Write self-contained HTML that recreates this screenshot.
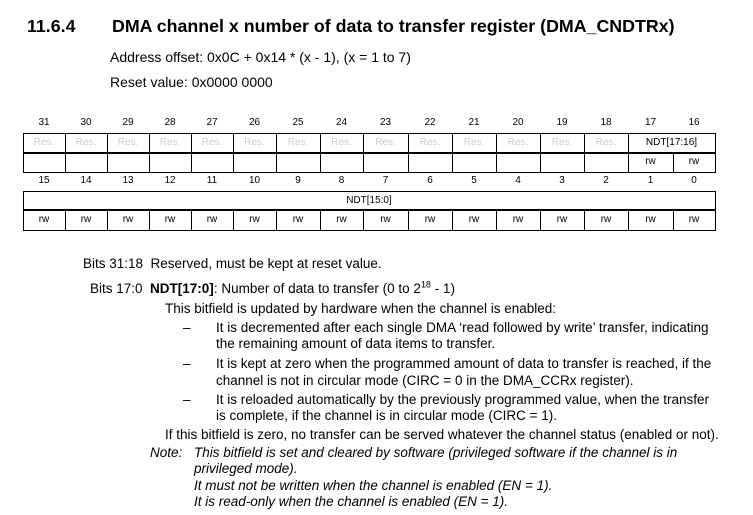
<!DOCTYPE html>
<html><head><meta charset="utf-8"><style>
body{margin:0;width:753px;height:515px;background:#fff;position:relative;font-family:"Liberation Sans",Arial,sans-serif;color:#000;overflow:hidden}
.a{position:absolute;white-space:nowrap;font-size:13.5px;line-height:15px}
.t{position:absolute;font-weight:bold;font-size:17.8px;top:16px}
.c{position:absolute;font-size:10px;text-align:center;line-height:10px}
.box{position:absolute;border:1px solid #000;box-sizing:border-box}
.g{color:#ccc}
i{font-style:italic}
</style></head><body>
<div class="t" style="left:27px">11.6.4</div>
<div class="t" style="left:112px">DMA channel x number of data to transfer register (DMA_CNDTRx)</div>
<div class="a" style="left:110px;top:50px;font-size:14px">Address offset: 0x0C + 0x14 * (x - 1), (x = 1 to 7)</div>
<div class="a" style="left:110px;top:75px;font-size:14px">Reset value: 0x0000 0000</div>
<div id="reg"></div>
<div class="a" style="left:83px;top:256px">Bits 31:18&nbsp; Reserved, must be kept at reset value.</div>
<div class="a" style="left:90px;top:281px">Bits 17:0&nbsp; <b>NDT[17:0]</b>: Number of data to transfer (0 to 2<sup style="font-size:9px;line-height:0">18</sup> - 1)</div>
<div class="a" style="left:165px;top:301px">This bitfield is updated by hardware when the channel is enabled:</div>
<div class="a" style="left:183px;top:320px">–</div>
<div class="a" style="left:216px;top:320px">It is decremented after each single DMA ‘read followed by write’ transfer, indicating</div>
<div class="a" style="left:216px;top:336px">the remaining amount of data items to transfer.</div>
<div class="a" style="left:183px;top:356px">–</div>
<div class="a" style="left:216px;top:356px">It is kept at zero when the programmed amount of data to transfer is reached, if the</div>
<div class="a" style="left:216px;top:373px">channel is not in circular mode (CIRC = 0 in the DMA_CCRx register).</div>
<div class="a" style="left:183px;top:392px">–</div>
<div class="a" style="left:216px;top:392px">It is reloaded automatically by the previously programmed value, when the transfer</div>
<div class="a" style="left:216px;top:408px">is complete, if the channel is in circular mode (CIRC = 1).</div>
<div class="a" style="left:165px;top:427px">If this bitfield is zero, no transfer can be served whatever the channel status (enabled or not).</div>
<div class="a" style="left:150px;top:445px"><i>Note:</i></div>
<div class="a" style="left:194px;top:445px"><i>This bitfield is set and cleared by software (privileged software if the channel is in</i></div>
<div class="a" style="left:194px;top:461px"><i>privileged mode).</i></div>
<div class="a" style="left:194px;top:478px"><i>It must not be written when the channel is enabled (EN = 1).</i></div>
<div class="a" style="left:194px;top:494px"><i>It is read-only when the channel is enabled (EN = 1).</i></div>
<script>
var b=[23,65,107,149,191,233,276,320,363,408,452,496,540,584,628,673,715];
var h='';
function box(x1,y1,x2,y2,txt,cls){h+='<div class="box" style="left:'+x1+'px;top:'+y1+'px;width:'+(x2-x1+1)+'px;height:'+(y2-y1+1)+'px"></div>';
 if(txt)h+='<div class="c '+(cls||'')+'" style="left:'+x1+'px;top:'+(Math.round((y1+y2)/2)-5)+'px;width:'+(x2-x1)+'px">'+txt+'</div>';}
function num(i,y,t){h+='<div class="c" style="left:'+b[i]+'px;top:'+y+'px;width:'+(b[i+1]-b[i])+'px">'+t+'</div>';}
for(var i=0;i<16;i++){num(i,118,31-i);num(i,176,15-i);}
for(var i=0;i<14;i++){box(b[i],133,b[i+1],153,'Res.','g');box(b[i],152,b[i+1],172,'');}
box(b[14],133,b[16],153,'NDT[17:16]');
box(b[14],152,b[15],172,'rw');box(b[15],152,b[16],172,'rw');
box(b[0],191,b[16],210,'NDT[15:0]');
for(var i=0;i<16;i++)box(b[i],209,b[i+1],230,'rw');
document.getElementById('reg').innerHTML=h;
</script>
</body></html>
